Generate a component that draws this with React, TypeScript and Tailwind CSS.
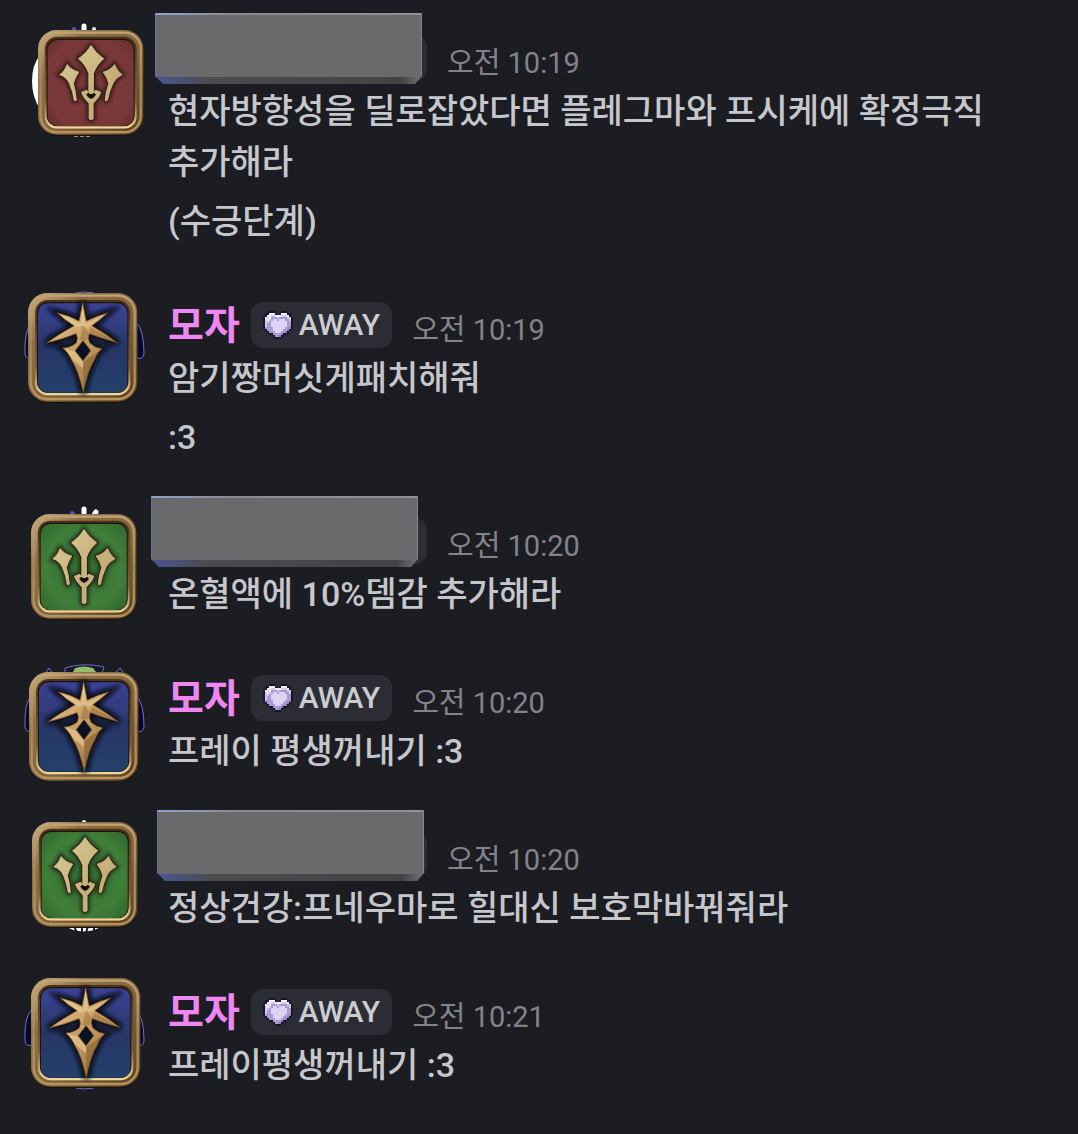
import clsx from "clsx";

type Job = "sage-red" | "sage-green" | "dark-knight";

interface Message {
  id: number;
  author: string | null;
  job: Job;
  // where the job tile sits on the 128px avatar
  tile: { x: number; y: number; size: number };
  coverClass?: string;
  backdrop: "moon" | "crown" | "ears" | "hood" | "fringe";
  time: string;
  lines: string[];
}

const messages: Message[] = [
  {
    id: 1,
    author: null,
    job: "sage-red",
    tile: { x: 18, y: 17, size: 106 },
    coverClass: "-left-[13px]",
    backdrop: "moon",
    time: "오전 10:19",
    lines: ["현자방향성을 딜로잡았다면 플레그마와 프시케에 확정극직 추가해라", "(수긍단계)"],
  },
  {
    id: 2,
    author: "모자",
    job: "dark-knight",
    tile: { x: 8, y: 13, size: 110 },
    backdrop: "ears",
    time: "오전 10:19",
    lines: ["암기짱머싯게패치해줘", ":3"],
  },
  {
    id: 3,
    author: null,
    job: "sage-green",
    tile: { x: 11, y: 18, size: 106 },
    coverClass: "-left-[17px]",
    backdrop: "crown",
    time: "오전 10:20",
    lines: ["온혈액에 10%뎀감 추가해라"],
  },
  {
    id: 4,
    author: "모자",
    job: "dark-knight",
    tile: { x: 9, y: 19, size: 110 },
    backdrop: "hood",
    time: "오전 10:20",
    lines: ["프레이 평생꺼내기 :3"],
  },
  {
    id: 5,
    author: null,
    job: "sage-green",
    tile: { x: 12, y: 12, size: 106 },
    coverClass: "-left-[11px]",
    backdrop: "fringe",
    time: "오전 10:20",
    lines: ["정상건강:프네우마로 힐대신 보호막바꿔줘라"],
  },
  {
    id: 6,
    author: "모자",
    job: "dark-knight",
    tile: { x: 11, y: 11, size: 110 },
    backdrop: "ears",
    time: "오전 10:21",
    lines: ["프레이평생꺼내기 :3"],
  },
];

const HEART = [
  "...KKK...KKK...",
  ".KKWWWK.KWWWKK.",
  ".KWWLLWWWLLLWK.",
  "KWLWMMMLMMMMLLK",
  "KLWLMPPMPPPMMLK",
  "KLLMPPPPPPPPMMK",
  "KLMMPPPPPPPPMMK",
  "KLMMPPPPPPPPMMK",
  "KMMMMPPPPPPMMDK",
  ".KMMMPPPPPMMDK.",
  "..KMMMPPPMMDK..",
  "...KKMMMMDKK...",
  ".....KMMDK.....",
  "......KKK......",
];

const HEART_COLORS: Record<string, string> = {
  K: "#17152a",
  W: "#f4effc",
  L: "#d3c7ee",
  M: "#aa9ad4",
  P: "#ded3f5",
  D: "#8f80bd",
};

function PixelHeart() {
  return (
    <svg viewBox="0 0 15 14" className="h-7 w-[30px]" shapeRendering="crispEdges" aria-hidden="true">
      {HEART.map((row, y) =>
        row.split("").map((c, x) =>
          c === "." ? null : <rect key={`${x}-${y}`} x={x} y={y} width="1" height="1" fill={HEART_COLORS[c]} />
        )
      )}
    </svg>
  );
}

// Gradients shared by every tile
function SharedDefs() {
  return (
    <svg className="absolute h-0 w-0" aria-hidden="true">
      <defs>
        <linearGradient id="frame" x1="0" y1="0" x2="1" y2="1">
          <stop offset="0" stopColor="#cdb488" />
          <stop offset="0.25" stopColor="#8f7149" />
          <stop offset="0.6" stopColor="#80623c" />
          <stop offset="1" stopColor="#5a4122" />
        </linearGradient>
        <linearGradient id="frameLight" x1="0" y1="0" x2="0" y2="1">
          <stop offset="0" stopColor="#c2a473" />
          <stop offset="0.5" stopColor="#a68857" />
          <stop offset="1" stopColor="#b8955c" />
        </linearGradient>
        <linearGradient id="frameInner" x1="0" y1="0" x2="0" y2="1">
          <stop offset="0" stopColor="#4b3216" />
          <stop offset="0.7" stopColor="#7d5f36" />
          <stop offset="1" stopColor="#f6dca0" />
        </linearGradient>
        <radialGradient id="red" r="0.75">
          <stop offset="0" stopColor="#7c3a3a" />
          <stop offset="0.7" stopColor="#793838" />
          <stop offset="1" stopColor="#5c2828" />
        </radialGradient>
        <radialGradient id="green" r="0.75">
          <stop offset="0" stopColor="#326c30" />
          <stop offset="0.6" stopColor="#407e3a" />
          <stop offset="1" stopColor="#2d602c" />
        </radialGradient>
        <linearGradient id="blue" x1="0" y1="0" x2="0" y2="1">
          <stop offset="0" stopColor="#3b4496" />
          <stop offset="0.5" stopColor="#273668" />
          <stop offset="1" stopColor="#23406a" />
        </linearGradient>
        <linearGradient id="sageGold" x1="0" y1="0" x2="1" y2="1">
          <stop offset="0" stopColor="#dccb98" />
          <stop offset="0.5" stopColor="#cab47e" />
          <stop offset="1" stopColor="#bca269" />
        </linearGradient>
        <linearGradient id="darkGold" x1="0" y1="0" x2="0.7" y2="1">
          <stop offset="0" stopColor="#e6cb93" />
          <stop offset="0.45" stopColor="#cda56b" />
          <stop offset="1" stopColor="#a0733c" />
        </linearGradient>
        <filter id="glow" x="-20%" y="-20%" width="140%" height="140%">
          <feGaussianBlur stdDeviation="7" />
        </filter>
      </defs>
    </svg>
  );
}

const SAGE_PATH =
  "M160 46Q172 68 198 86Q176 104 167 130L167 188Q160 193 153 188L153 130Q144 104 122 86Q148 68 160 46Z" +
  "M88 103Q100 120 123 126Q112 142 107 160Q114 184 116 210Q113 214 109 210Q106 184 95 160Q86 140 66 134Q82 122 88 103Z" +
  "M230 103Q237 122 253 134Q234 142 225 160Q214 184 209 210Q205 214 202 210Q204 184 213 160Q208 142 196 126Q219 120 230 103Z" +
  "M147 180L151 186L144 194Q151 206 160 208Q169 206 176 194L169 186L173 180L189 186L183 200L166 220L166 266Q160 272 154 266L154 220L137 200L131 186Z";

const KNIGHT_PATH =
  "M164 27Q169 56 175 84Q205 68 240 59Q218 80 192 98Q234 122 268 149Q220 136 184 122Q178 136 186 150Q202 165 222 167Q206 180 198 204Q180 230 166 300Q150 230 132 204Q122 180 104 165Q128 164 144 150Q152 136 144 122Q106 138 55 150Q94 122 138 98Q108 80 87 59Q126 68 153 84Q159 56 164 27Z" +
  "M165 143L142 173L165 203L188 173Z";

function JobTile({ job }: { job: Job }) {
  const fill = job === "sage-red" ? "url(#red)" : job === "sage-green" ? "url(#green)" : "url(#blue)";
  const knight = job === "dark-knight";
  return (
    <>
      <rect x="2" y="6" width="326" height="324" rx="58" fill="#15110e" />
      <rect x="0" y="0" width="328" height="326" rx="58" fill="url(#frame)" />
      <rect x="8" y="8" width="312" height="310" rx="50" fill="none" stroke="url(#frameLight)" strokeWidth="7" />
      <rect x="21" y="21" width="286" height="286" rx="38" fill="url(#frameInner)" />
      <rect x="27" y="27" width="274" height="273" rx="33" fill="#1c140e" />
      <rect x="30" y="31" width="268" height="268" rx="30" fill={fill} />
      {knight ? (
        <>
          <path d={KNIGHT_PATH} fill="#080c18" stroke="#080c18" strokeWidth="22" filter="url(#glow)" />
          <path d="M165 140L138 173L165 206L192 173Z" fill="#0a1122" />
          <path d={KNIGHT_PATH} fill="url(#darkGold)" fillRule="evenodd" stroke="#5e401f" strokeWidth="2" />
          <path
            d="M164 34Q168 70 172 92L232 64L180 104L164 98L148 104L96 64L158 92Z"
            fill="#fbe6b6"
            opacity="0.35"
          />
          <path d="M182 120L262 146L190 104ZM165 98L182 120L176 142H154Z" fill="#7f5a30" opacity="0.35" />
          <path d="M166 206L196 186L218 169L198 202Q180 232 166 296Z" fill="#6f4a22" opacity="0.4" />
          <path d="M110 167L138 175L165 206V226L136 202Z" fill="#f7dca4" opacity="0.5" />
        </>
      ) : (
        <g transform="translate(-1 0) scale(1.04)">
          <path
            d={SAGE_PATH}
            fill="#140b08"
            stroke="#140b08"
            strokeWidth="12"
            filter="url(#glow)"
            opacity="0.8"
          />
          <path d="M146 188H174L160 208Z" fill="#140b08" />
          <path d={SAGE_PATH} fill="url(#sageGold)" stroke="#2c1c0f" strokeWidth="7" strokeLinejoin="round" paintOrder="stroke" />
          <path d={SAGE_PATH} fill="none" stroke="#e3d2a0" strokeWidth="2" strokeLinejoin="round" />
        </g>
      )}
    </>
  );
}

function Backdrop({ kind }: { kind: Message["backdrop"] }) {
  if (kind === "moon") {
    return (
      <>
        <path d="M20 42Q12 52 12 68Q12 84 20 96Z" fill="#ffffff" />
        <path d="M54 18V16" stroke="#5556b8" strokeWidth="4" strokeLinecap="round" />
        <path d="M64 18V13" stroke="#ffffff" strokeWidth="5" strokeLinecap="round" />
        <path d="M74 18V16" stroke="#e8e8f4" strokeWidth="4" strokeLinecap="round" />
        <path d="M54 122H72" stroke="#ffffff" strokeWidth="3" strokeDasharray="4 2" />
      </>
    );
  }
  if (kind === "crown") {
    return (
      <>
        <path d="M54 19L52 17" stroke="#5556b8" strokeWidth="4" strokeLinecap="round" />
        <path d="M64 19V13M74 19L76 16" stroke="#ffffff" strokeWidth="5" strokeLinecap="round" />
      </>
    );
  }
  if (kind === "fringe") {
    return (
      <>
        <path d="M64 13V12" stroke="#ffffff" strokeWidth="4" strokeLinecap="round" />
        <path d="M41 114Q64 129 86 114Z" fill="#ffffff" />
        <path d="M54 116L57 123M62 116V123M68 116L66 123M74 116V122M79 116L80 121" stroke="#1c1d22" strokeWidth="2" />
      </>
    );
  }
  return (
    <>
      <path
        d="M12 42Q4 50 5 74Q6 80 12 78ZM116 42Q124 50 124 74Q123 80 117 78Z"
        fill="#06072b"
        stroke="#6e70c4"
        strokeWidth="1"
      />
      {kind === "hood" && (
        <>
          <path d="M45 20V15Q64 9 84 14L82 20" fill="#14152e" stroke="#6e70c4" strokeWidth="1" />
          <path d="M55 15Q64 12 73 15L76 19H53Z" fill="#94bd69" />
          <path d="M26 19L29 15L32 19M96 19L100 15L103 19" fill="none" stroke="#6e70c4" strokeWidth="1" />
        </>
      )}
      {kind === "ears" && (
        <path d="M56 13Q64 11 74 13M56 121Q64 123 74 121" fill="none" stroke="#6e70c4" strokeWidth="1" />
      )}
    </>
  );
}

function Avatar({ message }: { message: Message }) {
  const { x, y, size } = message.tile;
  return (
    <svg viewBox="0 0 128 128" className="-mt-[19px] -mb-6 h-32 w-32 shrink-0" aria-hidden="true">
      <Backdrop kind={message.backdrop} />
      <g transform={`translate(${x} ${y}) scale(${size / 330})`}>
        <JobTile job={message.job} />
      </g>
    </svg>
  );
}

function NameCover({ className }: { className?: string }) {
  return (
    <div className="relative h-[46px] w-[259px] rounded-xl bg-[#2c2d34]">
      <svg
        viewBox="0 0 267 71"
        className={clsx("absolute -top-[22px] h-[71px] w-[267px]", className)}
        aria-hidden="true"
      >
        <defs>
          <linearGradient id="bevel">
            <stop offset="0" stopColor="#4b5597" />
            <stop offset="0.2" stopColor="#4b4c50" />
            <stop offset="0.92" stopColor="#434343" />
            <stop offset="1" stopColor="#747474" />
          </linearGradient>
          <linearGradient id="edge">
            <stop offset="0" stopColor="#93a1cf" />
            <stop offset="0.3" stopColor="#8a8b8d" />
            <stop offset="1" stopColor="#909193" />
          </linearGradient>
        </defs>
        <path d="M0 63H267L260 71H8Z" fill="url(#bevel)" />
        <rect width="267" height="64" rx="2" fill="#696a6b" />
        <rect width="267" height="2" rx="1" fill="url(#edge)" />
        <path d="M0.5 2V63" stroke="#66729f" />
        <path d="M266.5 2V63" stroke="#858687" />
      </svg>
    </div>
  );
}

function MessageRow({ message }: { message: Message }) {
  return (
    <li className="flex gap-5">
      <Avatar message={message} />
      <div className="min-w-0 flex-1">
        <div className="mb-[3px] flex h-[51px] items-center">
          {message.author ? (
            <>
              <span className="pt-1 text-[39px] leading-[51px] font-bold text-[#ee87f2]">{message.author}</span>
              <span className="ml-[11px] flex h-[46px] items-center gap-1.5 rounded-xl bg-[#2c2d34] px-3 text-[30px] font-medium text-[#cbccd2]">
                <PixelHeart />
                AWAY
              </span>
            </>
          ) : (
            <NameCover className={message.coverClass} />
          )}
          <time className="ml-5 pt-3 text-[29px] leading-[51px] text-[#82838b]">{message.time}</time>
        </div>
        <div className="space-y-2 text-[34px] leading-[51px] font-medium text-[#c6c7cc]">
          {message.lines.map((line) => (
            <p key={line} className="break-keep">
              {line}
            </p>
          ))}
        </div>
      </div>
    </li>
  );
}

export default function App() {
  return (
    <main className="min-h-screen bg-[#1c1d22] px-5 pt-8 pb-10 font-[Roboto,'Noto_Sans_CJK_KR',sans-serif]">
      <SharedDefs />
      <ul className="space-y-[52px]">
        {messages.map((message) => (
          <MessageRow key={message.id} message={message} />
        ))}
      </ul>
    </main>
  );
}
